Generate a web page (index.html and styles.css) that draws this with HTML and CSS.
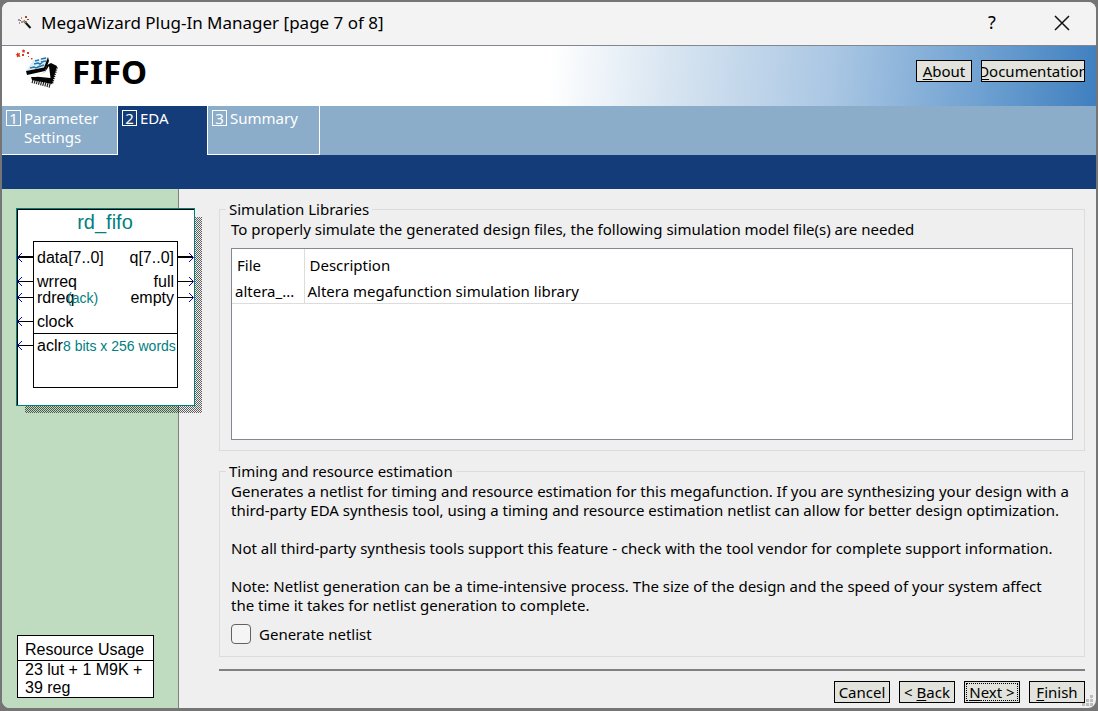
FILE: index.html
```html
<!DOCTYPE html>
<html lang="en">
<head>
<meta charset="utf-8">
<title>MegaWizard Plug-In Manager</title>
<link rel="stylesheet" href="styles.css">
</head>
<body>
<div class="window">
  <header class="titlebar">
    <svg class="wand" width="14" height="14" viewBox="0 0 14 14" aria-hidden="true">
      <path d="M6 5l6.500 7" stroke="#111" stroke-width="2"/>
      <path d="M5.500 4.500l2.500 2.500" stroke="#9a9a48" stroke-width="1.500"/>
      <g fill="#a8909a"><rect x="0" y="3" width="2" height="2"/><rect x="3" y="1" width="1" height="2"/><rect x="3" y="5" width="2" height="2"/><rect x="1" y="6" width="1" height="2"/><rect x="8" y="5" width="1" height="1"/></g>
      <g fill="#a04848"><rect x="7" y="0" width="2" height="2"/><rect x="9" y="3" width="2" height="1"/><rect x="2" y="4" width="1" height="1"/></g>
    </svg>
    <h1 class="title">MegaWizard Plug-In Manager [page 7 of 8]</h1>
    <button class="caption-button" type="button" aria-label="Help">?</button>
    <button class="caption-button" type="button" aria-label="Close">
      <svg width="16" height="16" viewBox="0 0 16 16"><path d="M1 1l14 14M15 1L1 15" stroke="#111" stroke-width="1.500" fill="none"/></svg>
    </button>
  </header>

  <div class="banner">
    <svg class="chip" width="50" height="50" viewBox="0 0 50 50" aria-hidden="true">
      <g fill="#d8381c">
        <path d="M3 3l1 1.500 2-.5-.5 2 1 2-2-.5L3 8.500l-.200-2L1.500 5.500l1.500-.5z"/>
        <path d="M9 0l.8 1 1.200 0-.4 1.200.4 1.300-1.300-.3-1.200.6 0-1.300-.9-.9 1.200-.4z"/>
        <rect x="8" y="5" width="2" height="2"/><rect x="13" y="3" width="2" height="2"/><rect x="14" y="7" width="1" height="1"/><rect x="17" y="9" width="1.500" height="1.500"/>
      </g>
      <path d="M42 18l-5 17" stroke="#222" stroke-width="4" stroke-dasharray="1.200 1"/>
      <path d="M18 32l19 5" stroke="#222" stroke-width="4" stroke-dasharray="1.200 1"/>
      <path d="M33 16l4-2 6 3-5 18-20-4-1-3h5l9-5z" fill="#050505"/>
      <path d="M21 27.500l10-4.500 4-6 1.500 12z" fill="#fff"/>
      <path d="M12 22l7-11 15-3-4 11z" fill="#dceff7"/>
      <path d="M16 19l4-1 2 1 4-2M20 15l4-1 2 1 4-3M21 12l4-1M27 10l5-1M24 18l6-2M27 13l5-1" stroke="#2676ad" stroke-width="1.500" fill="none"/>
      <path d="M12 22l18-3.500L34 8l1 4-4 10-18 4z" fill="#050505"/>
    </svg>
    <h2 class="product">FIFO</h2>
    <nav class="banner-actions">
      <button class="push" type="button"><span><u>A</u>bout</span></button>
      <button class="push push-wide" type="button"><span><u>D</u>ocumentation</span></button>
    </nav>
  </div>

  <nav class="tabs" aria-label="Pages">
    <button class="tab tab-first" type="button"><span class="step">1</span><span>Parameter Settings</span></button>
    <button class="tab tab-active" type="button" aria-current="page"><span class="step">2</span><span>EDA</span></button>
    <button class="tab tab-last" type="button"><span class="step">3</span><span>Summary</span></button>
  </nav>
  <div class="subnav"></div>

  <div class="content">
    <aside class="side">
      <svg class="symbol" width="186" height="205" viewBox="0 0 186 205" role="img" aria-label="rd_fifo block symbol">
        <defs>
          <pattern id="dither" width="2" height="2" patternUnits="userSpaceOnUse">
            <rect width="1" height="1"/><rect x="1" y="1" width="1" height="1"/>
          </pattern>
          <path id="arrow" d="M6 -4.500L1.500 0L6 4.500"/>
        </defs>
        <rect class="shadow" x="9" y="9" width="177" height="196" fill="url(#dither)"/>
        <rect x="0" y="0" width="179" height="198" fill="#008080"/>
        <rect x="1" y="1" width="177" height="196" fill="#000"/>
        <rect x="2" y="2" width="176" height="195" fill="#fff"/>
        <rect x="177" y="2" width="2" height="195" fill="#008080"/>
        <rect x="177" y="2" width="1" height="195" fill="#fff"/>
        <rect class="outline" x="17.500" y="33.500" width="144" height="146"/>
        <path class="outline" d="M17 125.500h144M2 73.500h15M2 89.500h15M2 113.500h15M2 137.500h15M162 73.500h15M162 89.500h15"/>
        <path class="bus" d="M2 49h15M161 49h16"/>
        <g class="arrows">
          <use href="#arrow" x="0" y="49.500"/><use href="#arrow" x="0" y="73.500"/><use href="#arrow" x="0" y="89.500"/><use href="#arrow" x="0" y="113.500"/><use href="#arrow" x="0" y="137.500"/>
          <path d="M173 45l4.500 4.500l-4.500 4.500M173 69l4.500 4.500l-4.500 4.500M173 85l4.500 4.500l-4.500 4.500"/>
        </g>
        <text class="name" x="89" y="21">rd_fifo</text>
        <g class="port">
          <text x="21" y="55">data[7..0]</text><text x="21" y="79">wrreq</text><text x="21" y="95">rdreq</text><text x="21" y="119">clock</text><text x="21" y="143">aclr</text>
        </g>
        <g class="port port-out">
          <text x="158" y="55">q[7..0]</text><text x="158" y="79">full</text><text x="158" y="95">empty</text>
        </g>
        <g class="note"><text x="51" y="95">(ack)</text><text x="47" y="143">8 bits x 256 words</text></g>
      </svg>
      <section class="usage">
        <h3 class="usage-title">Resource Usage</h3>
        <p class="usage-body">23 lut + 1 M9K + 39 reg</p>
      </section>
    </aside>

    <main class="main">
      <fieldset class="group group-grow">
        <legend>Simulation Libraries</legend>
        <p>To properly simulate the generated design files, the following simulation model file(s) are needed</p>
        <div class="list">
          <table>
            <thead><tr><th class="col-file">File</th><th>Description</th></tr></thead>
            <tbody><tr><td>altera_...</td><td>Altera megafunction simulation library</td></tr></tbody>
          </table>
        </div>
      </fieldset>

      <fieldset class="group">
        <legend>Timing and resource estimation</legend>
        <p>Generates a netlist for timing and resource estimation for this megafunction. If you are synthesizing your design with a<br>third-party EDA synthesis tool, using a timing and resource estimation netlist can allow for better design optimization.</p>
        <p>Not all third-party synthesis tools support this feature - check with the tool vendor for complete support information.</p>
        <p>Note: Netlist generation can be a time-intensive process. The size of the design and the speed of your system affect<br>the time it takes for netlist generation to complete.</p>
        <label class="check"><input type="checkbox"><span>Generate netlist</span></label>
      </fieldset>

      <footer class="footer">
        <button class="push" type="button"><span>Cancel</span></button>
        <button class="push" type="button"><span>&lt; <u>B</u>ack</span></button>
        <button class="push push-focus" type="button"><span><u>N</u>ext &gt;</span></button>
        <button class="push" type="button"><span><u>F</u>inish</span></button>
      </footer>
    </main>
  </div>
  <svg class="grip" width="11" height="11" viewBox="0 0 11 11" aria-hidden="true">
    <path d="M8 0h3v3h-3zM4 4h3v3h-3zM8 4h3v3h-3zM0 8h3v3h-3zM4 8h3v3h-3zM8 8h3v3h-3z" fill="#bdbdbd"/>
  </svg>
</div>
</body>
</html>
```

FILE: styles.css
```css
* { box-sizing: border-box; }

body {
  margin: 0;
  height: 100vh;
  padding: 2px 2px 3px;
  background: #757575;
  color: #000;
  font: 15px/19px Tahoma, "Noto Sans", sans-serif;
}

h1, h2, h3, p { margin: 0; font-weight: normal; }
button { font: inherit; color: inherit; }
u { text-underline-offset: 2px; text-decoration-thickness: 1px; text-decoration-skip-ink: none; }

.window {
  position: relative;
  display: flex;
  flex-direction: column;
  height: 100%;
  overflow: hidden;
  border-radius: 8px;
  background: #efefef;
}

.titlebar {
  display: flex;
  align-items: center;
  flex: none;
  height: 44px;
  padding-left: 16px;
  padding-bottom: 2px;
  border-bottom: 1px solid #868690;
  background: #f3f3f3;
}
.title {
  flex: 1;
  margin-left: 9px;
  font-size: 17px;
  line-height: 24px;
}
.caption-button {
  display: flex;
  align-items: center;
  justify-content: center;
  width: 70px;
  height: 40px;
  padding: 0 0 0 2px;
  border: 0;
  background: none;
  font-size: 18px;
}

.banner {
  display: flex;
  align-items: center;
  flex: none;
  height: 60px;
  padding: 0 11px 8px 12px;
  background: linear-gradient(95deg, #fff 50%, #dbe7f2 60%, #a9c6e3 76%, #6c9fd0 90%, #3f7fbf 100%);
}
.product {
  flex: 1;
  margin-left: 8px;
  font: bold 33px/40px Tahoma, "Noto Sans", sans-serif;
}
.chip { align-self: flex-start; flex: none; margin-top: 3px; }
.banner-actions { display: flex; gap: 9px; margin-bottom: 2px; }

.push {
  display: flex;
  align-items: center;
  justify-content: center;
  width: 56px;
  height: 22px;
  padding: 0;
  overflow: hidden;
  border: 1px solid #000;
  background: #e1e3dc;
  white-space: nowrap;
}
.push-wide { width: 104px; }
.push-focus { outline: 1px dotted #000; outline-offset: -3px; }

.tabs {
  display: flex;
  flex: none;
  height: 49px;
  background: #8badca;
  color: #fff;
}
.tab {
  display: flex;
  align-items: flex-start;
  gap: 3px;
  padding: 3px 4px;
  border: 1px solid #fff;
  border-width: 0 1px 1px 0;
  background: none;
  text-align: left;
}
.tab-first { width: 116px; }
.tab-active { width: 89px; border: 0; background: #143c78; }
.tab-last { width: 113px; border-left-width: 1px; }
.step {
  flex: none;
  width: 15px;
  height: 16px;
  margin-top: 1px;
  border: 1px solid #fff;
  line-height: 14px;
  text-align: center;
}
.subnav { flex: none; height: 34px; background: #143c78; }

.content { display: flex; flex: 1; min-height: 0; }

.side {
  display: flex;
  flex-direction: column;
  justify-content: space-between;
  flex: none;
  width: 177px;
  padding: 19px 0 10px 14px;
  border-right: 1px solid #808080;
  background: #c0dcc0;
  font-family: "Liberation Sans", Arial, sans-serif;
}
.symbol { position: relative; flex: none; overflow: visible; shape-rendering: crispEdges; font-size: 16px; }
.shadow { opacity: 0.6; }
.outline { fill: none; stroke: #000; }
.bus { stroke: #000; stroke-width: 2; }
.arrows { fill: none; stroke: #0000d0; stroke-width: 1; shape-rendering: auto; }
.name { fill: #008080; font-size: 20px; text-anchor: middle; }
.port-out { text-anchor: end; }
.note { fill: #008080; font-size: 14px; }

.usage {
  width: 137px;
  margin-left: 1px;
  border: 1px solid #000;
  background: #fff;
  font-size: 16px;
  line-height: 18px;
}
.usage-title {
  padding: 5px 7px 1px;
  border-bottom: 1px solid #000;
  font-size: 16px;
}
.usage-body { padding: 0 7px; }

.main {
  display: flex;
  flex-direction: column;
  flex: 1;
  min-width: 0;
  padding: 10px 11px 5px 40px;
}
.group {
  display: flex;
  flex-direction: column;
  flex: none;
  gap: 19px;
  min-width: 0;
  margin: 0 0 10px;
  padding: 1px 11px 12px;
  border: 1px solid #dcdcdc;
}
.group legend { margin-left: -5px; padding: 0 3px; line-height: 20px; }
.group-grow { flex: 1; gap: 9px; padding-bottom: 10px; }

.list {
  flex: 1;
  border: 1px solid #828790;
  background: #fff;
}
.list table { width: 100%; border-collapse: collapse; table-layout: fixed; }
.list th {
  height: 31px;
  padding: 1px 5px 0;
  font-weight: normal;
  text-align: left;
}
.list td {
  height: 23px;
  padding: 1px 3px 0;
  border-bottom: 1px solid #dcdcdc;
}
.list th:first-child, .list td:first-child { border-right: 1px solid #dcdcdc; }
.col-file { width: 72px; }

.check {
  display: flex;
  align-items: center;
  gap: 8px;
  margin-top: -10px;
}
.check input {
  appearance: none;
  width: 20px;
  height: 20px;
  margin: 0;
  border: 1px solid #626262;
  border-radius: 4px;
  background: #f5f5f5;
}

.footer {
  display: flex;
  justify-content: flex-end;
  flex: none;
  gap: 9px;
  margin-top: 2px;
  padding-top: 10px;
  border-top: 2px solid #808080;
}

.grip { position: absolute; right: 3px; bottom: 2px; }
```
